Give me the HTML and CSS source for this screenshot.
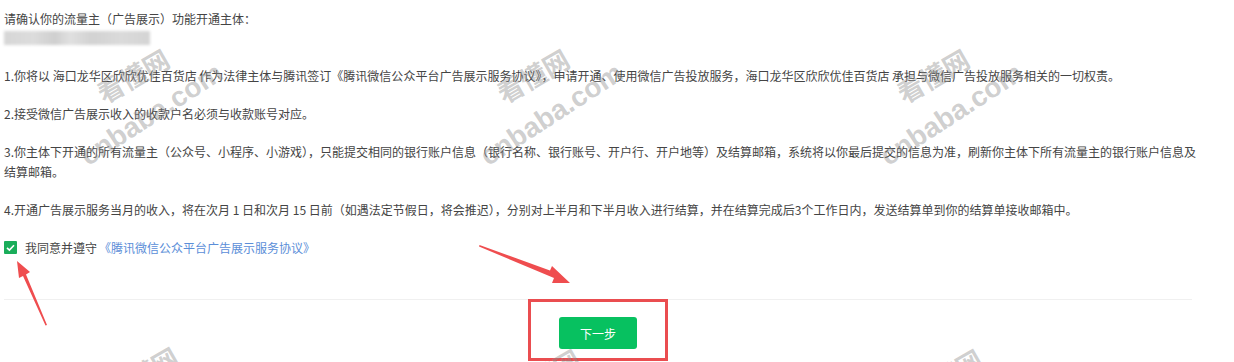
FILE: index.html
```html
<!DOCTYPE html>
<html lang="zh-CN">
<head>
<meta charset="utf-8">
<title>流量主开通</title>
<link rel="stylesheet" href="styles.css">
</head>
<body>
<div class="page">
  <div class="content">
    <p class="intro">请确认你的流量主（广告展示）功能开通主体：</p>
    <div class="masked"></div>
    <p class="item first">1.你将以 海口龙华区欣欣优佳百货店 作为法律主体与腾讯签订《腾讯微信公众平台广告展示服务协议》，申请开通、使用微信广告投放服务，海口龙华区欣欣优佳百货店 承担与微信广告投放服务相关的一切权责。</p>
    <p class="item">2.接受微信广告展示收入的收款户名必须与收款账号对应。</p>
    <p class="item">3.你主体下开通的所有流量主（公众号、小程序、小游戏），只能提交相同的银行账户信息（银行名称、银行账号、开户行、开户地等）及结算邮箱，系统将以你最后提交的信息为准，刷新你主体下所有流量主的银行账户信息及结算邮箱。</p>
    <p class="item">4.开通广告展示服务当月的收入，将在次月 1 日和次月 15 日前（如遇法定节假日，将会推迟），分别对上半月和下半月收入进行结算，并在结算完成后3个工作日内，发送结算单到你的结算单接收邮箱中。</p>
    <label class="agree">
      <span class="checkbox"><svg viewBox="0 0 13 13" width="13" height="13"><path d="M3 6.8 L5.4 9.1 L10 4.2" fill="none" stroke="#fff" stroke-width="1.6"/></svg></span>
      <span class="agree-text">我同意并遵守</span>
      <a class="agree-link">《腾讯微信公众平台广告展示服务协议》</a>
    </label>
  </div>
  <div class="footer">
    <button class="btn-next">下一步</button>
  </div>

  <div class="mark-box"></div>
  <svg class="arrows" width="1234" height="362" viewBox="0 0 1234 362">
    <polygon fill="#ef4d4f" points="47,325 45.5,325.5 23,276 19,278 17,261 30,272 26,274.5"/>
    <polygon fill="#ef4d4f" points="479,246.5 479.5,245 550,270.5 552,266 570,283 552,283 554,278"/>
  </svg>

  <div class="wm wm-a" style="left:99px;top:82px">看懂网</div>
  <div class="wm wm-b" style="left:83px;top:145px">cnbaba.com</div>
  <div class="wm wm-a" style="left:499px;top:82px">看懂网</div>
  <div class="wm wm-b" style="left:483px;top:145px">cnbaba.com</div>
  <div class="wm wm-a" style="left:899px;top:82px">看懂网</div>
  <div class="wm wm-b" style="left:883px;top:145px">cnbaba.com</div>
  <div class="wm wm-a" style="left:108px;top:380px">看懂网</div>
  <div class="wm wm-a" style="left:510px;top:382px">看懂网</div>
  <div class="wm wm-a" style="left:912px;top:382px">看懂网</div>
</div>
</body>
</html>
```
FILE: styles.css
```css
* { box-sizing: border-box; }
html, body { margin: 0; padding: 0; background: #fff; }
body {
  width: 1234px;
  height: 362px;
  overflow: hidden;
  font-family: "Noto Sans CJK SC", "Noto Sans", "Liberation Sans", sans-serif;
  font-size: 12px;
  color: #444;
}
.page {
  position: relative;
  width: 1234px;
  height: 362px;
  overflow: hidden;
}
.content {
  width: 1200px;
  padding: 9px 0 0 4px;
}
p { margin: 0; line-height: 20px; }
.masked {
  width: 146px;
  height: 14px;
  margin-top: 2px;
  background: linear-gradient(90deg, #d6d6d6 0, #dcdcdc 20%, #cfcfcf 35%, #e0e0e0 45%, #d2d2d2 60%, #dadada 80%, #d4d4d4 100%);
  filter: blur(1.5px);
}
.item { margin-top: 18px; }
.item.first { margin-top: 21px; }
.agree {
  display: flex;
  align-items: center;
  height: 20px;
  margin-top: 17px;
}
.checkbox {
  width: 13px;
  height: 13px;
  background: #1aad5a;
  border-radius: 1px;
  display: flex;
}
.agree-text { margin-left: 8px; }
.agree-link { color: #5b8ed8; margin-left: 2px; }
.footer {
  width: 1188px;
  margin: 42px 0 0 4px;
  border-top: 1px solid #f0f0f0;
  padding-top: 17px;
  display: flex;
  justify-content: center;
}
.btn-next {
  width: 78px;
  height: 32px;
  border: none;
  border-radius: 3px;
  background: #07c160;
  color: #fff;
  font-family: inherit;
  font-size: 12px;
  padding: 0;
}
.mark-box {
  position: absolute;
  left: 528px;
  top: 299px;
  width: 140px;
  height: 62px;
  border: 3px solid #ea4d50;
}
.arrows {
  position: absolute;
  left: 0;
  top: 0;
  pointer-events: none;
}
.wm {
  position: absolute;
  line-height: 1;
  white-space: nowrap;
  font-weight: bold;
  color: rgba(140, 140, 140, 0.42);
  transform-origin: 0 50%;
  pointer-events: none;
}
.wm-a {
  font-size: 26px;
  transform: rotate(-30deg);
}
.wm-b {
  font-family: "Liberation Sans", sans-serif;
  font-size: 28px;
  transform: rotate(-33deg);
}
```
